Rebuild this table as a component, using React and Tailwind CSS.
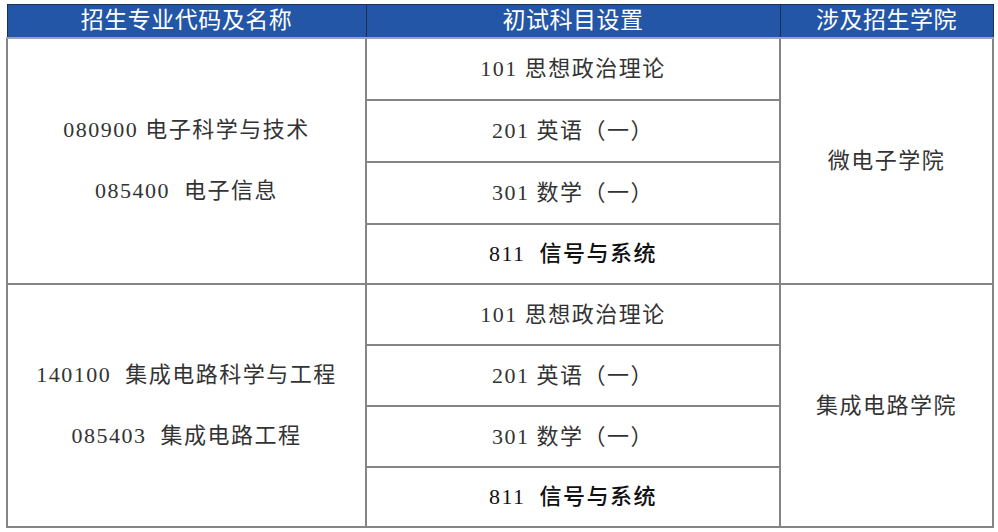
const groups = [
  {
    majors: ["080900 电子科学与技术", "085400  电子信息"],
    school: "微电子学院",
    heights: ["h-[62px]", "h-[62px]", "h-[62px]", "h-[60px]"],
  },
  {
    majors: ["140100  集成电路科学与工程", "085403  集成电路工程"],
    school: "集成电路学院",
    heights: ["h-[61px]", "h-[61px]", "h-[61px]", "h-[60px]"],
  },
];

const subjects = [
  { text: "101 思想政治理论", strong: false },
  { text: "201 英语（一）", strong: false },
  { text: "301 数学（一）", strong: false },
  { text: "811  信号与系统", strong: true },
];

const cell = "border-2 border-[#858585] p-0 text-center align-middle";

export default function App() {
  return (
    <div className="w-[998px] h-[532px] bg-white pl-[6px] pt-[4px]">
      <table
        className="w-[986px] border-collapse table-fixed text-[22px] text-[#333] tracking-[1.5px]"
        style={{ fontFamily: '"Liberation Serif", "Noto Sans CJK SC", serif' }}
      >
        <colgroup>
          <col className="w-[359px]" />
          <col className="w-[414px]" />
          <col className="w-[213px]" />
        </colgroup>
        <thead>
          <tr className="h-[33px] bg-[#2356a6] text-white text-[23px] tracking-[0.5px]">
            <th className="border border-[#1c2f57] border-b-2 border-b-[#9aa3b3] font-normal leading-[30px]">招生专业代码及名称</th>
            <th className="border border-[#1c2f57] border-b-2 border-b-[#9aa3b3] font-normal leading-[30px]">初试科目设置</th>
            <th className="border border-[#1c2f57] border-b-2 border-b-[#9aa3b3] font-normal leading-[30px]">涉及招生学院</th>
          </tr>
        </thead>
        <tbody>
          {groups.map((g) =>
            subjects.map((s, i) => (
              <tr key={g.school + i} className={g.heights[i]}>
                {i === 0 && (
                  <td rowSpan={4} className={cell}>
                    <div className="flex flex-col items-center gap-[31px]">
                      {g.majors.map((m) => (
                        <span key={m} className="whitespace-pre leading-[30px]">{m}</span>
                      ))}
                    </div>
                  </td>
                )}
                <td className={cell}>
                  <span
                    className={
                      s.strong
                        ? "whitespace-pre font-medium text-[#111]"
                        : "whitespace-pre"
                    }
                  >
                    {s.text}
                  </span>
                </td>
                {i === 0 && (
                  <td rowSpan={4} className={cell}>
                    {g.school}
                  </td>
                )}
              </tr>
            ))
          )}
        </tbody>
      </table>
    </div>
  );
}
